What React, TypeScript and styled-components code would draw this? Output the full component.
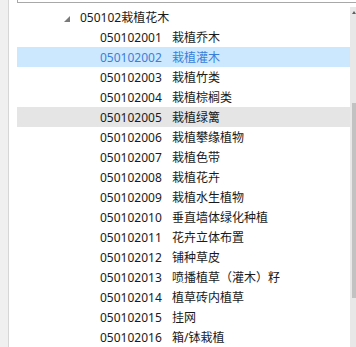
import React from 'react';
import styled, { createGlobalStyle } from 'styled-components';

const GlobalStyle = createGlobalStyle`
  html, body {
    margin: 0;
    padding: 0;
    background: #fff;
    overflow: hidden;
  }
`;

const Frame = styled.div`
  width: 356px;
  height: 347px;
  display: flex;
  overflow: hidden;
  font-family: "Noto Sans", "Noto Sans CJK SC", sans-serif;
  font-size: 12px;
  color: #1a1a1a;
`;

const SideStrip = styled.div`
  width: 8px;
  flex: none;
  background: #f0f0f0;
  border-right: 1px solid #d6d6d6;
`;

const Main = styled.div`
  flex: 1;
  display: flex;
  flex-direction: column;
  padding-left: 8px;
  min-width: 0;
`;

/* bottom edge of the search box above the tree */
const FieldEdge = styled.div`
  height: 2px;
  border-left: 1px solid #a8a8a8;
  border-bottom: 1px solid #a8a8a8;
`;

const TreeArea = styled.div`
  flex: 1;
  display: flex;
  margin-top: 4px;
  min-height: 0;
`;

const List = styled.div`
  flex: 1;
  display: flex;
  flex-direction: column;
`;

type RowState = 'normal' | 'selected' | 'hover';

const Row = styled.div<{ $state?: RowState; $indent: number }>`
  height: 20px;
  flex: none;
  display: flex;
  align-items: center;
  padding-left: ${(p) => p.$indent}px;
  white-space: nowrap;
  background: ${(p) =>
    p.$state === 'selected' ? '#cce8ff' : p.$state === 'hover' ? '#e5e5e5' : 'transparent'};
  color: ${(p) => (p.$state === 'selected' ? '#3a7fd8' : '#1a1a1a')};
`;

const Expander = styled.svg`
  width: 6px;
  height: 6px;
  margin-right: 10px;
  margin-top: 3px;
  flex: none;
`;

const Code = styled.span`
  width: 72px;
  flex: none;
`;

const Name = styled.span``;

const Scrollbar = styled.div`
  width: 6px;
  flex: none;
  background: #e8e8e8;
  display: flex;
  flex-direction: column;
  align-items: flex-end;
`;

const ArrowUp = styled.svg`
  width: 4px;
  height: 3px;
  margin-top: 4px;
`;

const Thumb = styled.div`
  width: 4px;
  height: 195px;
  margin-top: 89px;
  background: #c2c2c2;
`;

const items: [string, string][] = [
  ['050102001', '栽植乔木'],
  ['050102002', '栽植灌木'],
  ['050102003', '栽植竹类'],
  ['050102004', '栽植棕榈类'],
  ['050102005', '栽植绿篱'],
  ['050102006', '栽植攀缘植物'],
  ['050102007', '栽植色带'],
  ['050102008', '栽植花卉'],
  ['050102009', '栽植水生植物'],
  ['050102010', '垂直墙体绿化种植'],
  ['050102011', '花卉立体布置'],
  ['050102012', '铺种草皮'],
  ['050102013', '喷播植草（灌木）籽'],
  ['050102014', '植草砖内植草'],
  ['050102015', '挂网'],
  ['050102016', '箱/钵栽植'],
];

const stateOf = (code: string): RowState =>
  code === '050102002' ? 'selected' : code === '050102005' ? 'hover' : 'normal';

const App: React.FC = () => {
  return (
    <>
      <GlobalStyle />
      <Frame>
        <SideStrip />
        <Main>
          <FieldEdge />
          <TreeArea>
            <List>
              <Row $indent={47}>
                <Expander viewBox="0 0 6 6">
                  <polygon points="6,0 6,6 0,6" fill="#7a7a7a" />
                </Expander>
                050102栽植花木
              </Row>
              {items.map(([code, name]) => (
                <Row key={code} $indent={83} $state={stateOf(code)}>
                  <Code>{code}</Code>
                  <Name>{name}</Name>
                </Row>
              ))}
            </List>
            <Scrollbar>
              <ArrowUp viewBox="0 0 4 3">
                <polygon points="2,0 4,3 0,3" fill="#606060" />
              </ArrowUp>
              <Thumb />
            </Scrollbar>
          </TreeArea>
        </Main>
      </Frame>
    </>
  );
};

export default App;
